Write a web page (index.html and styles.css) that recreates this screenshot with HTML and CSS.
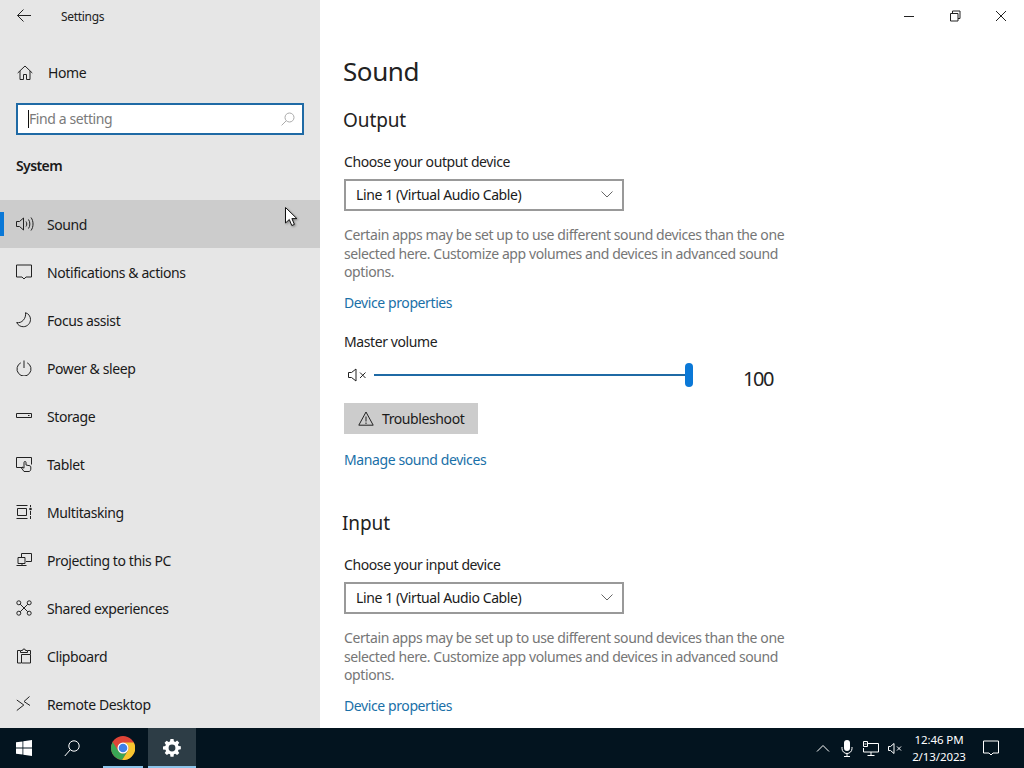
FILE: index.html
```html
<!DOCTYPE html>
<html lang="en">
<head>
<meta charset="utf-8">
<title>Settings</title>
<link rel="stylesheet" href="styles.css">
</head>
<body>
<div class="desktop">
  <div class="window">
    <aside class="sidebar">
      <div class="titlebar">
        <svg class="back" width="16" height="16" viewBox="0 0 16 16"><path d="M1.500 7.500H15M7.500 1.500l-6 6 6 6" /></svg>
        <span class="app-title">Settings</span>
      </div>
      <div class="home">
        <svg class="ico" width="16" height="16" viewBox="0 0 16 16"><path d="M.7 8L8 1l7.300 7M3 6v8.500h3.500V9.500h3v5H13V6"/></svg>
        <span>Home</span>
      </div>
      <div class="search">
        <span class="caret"></span><span class="placeholder">Find a setting</span>
        <svg class="search-ico" width="14" height="14" viewBox="0 0 14 14"><circle cx="8.500" cy="5.500" r="4.500"/><path d="M5.200 8.800L.6 13.400"/></svg>
      </div>
      <div class="group">System</div>
      <nav class="nav">
        <div class="nav-item active">
          <svg class="ico" width="18" height="16" viewBox="0 0 18 16"><path d="M.5 5.500h3L7.500 2v12l-4-3.500h-3zM10 5.500c1 1.500 1 3.500 0 5M12.500 3.500c1.800 2.500 1.800 6.500 0 9M15 1.500c2.700 3.500 2.700 9.500 0 13"/></svg>
          <span>Sound</span>
        </div>
        <div class="nav-item">
          <svg class="ico" width="16" height="16" viewBox="0 0 16 16"><path d="M.5 1h15v12h-5.500L8 15l-2-2H.5z"/></svg>
          <span>Notifications &amp; actions</span>
        </div>
        <div class="nav-item">
          <svg class="ico" width="16" height="16" viewBox="0 0 16 16"><path d="M9.500.7c3 1 5 3.500 5 6.700 0 4-3.200 7.300-7.200 7.300-3 0-5.500-1.600-6.600-4.200 4.800 1.300 9.800-4 8.800-9.800z"/></svg>
          <span>Focus assist</span>
        </div>
        <div class="nav-item">
          <svg class="ico" width="16" height="16" viewBox="0 0 16 16"><path d="M8 .5v7.500M4.800 2.800a7 7 0 1 0 6.400 0"/></svg>
          <span>Power &amp; sleep</span>
        </div>
        <div class="nav-item">
          <svg class="ico" width="16" height="16" viewBox="0 0 16 16"><path d="M.5 5.500h15v4H.5zM12 7.500h1.500"/></svg>
          <span>Storage</span>
        </div>
        <div class="nav-item">
          <svg class="ico" width="16" height="16" viewBox="0 0 16 16"><path d="M7 11.500H.5v-10h15v7M8 15.500l-2.500-3.500 1-.8 1.500 1V6.500a1 1 0 0 1 2 0V9l4 .8c.6.200.8.700.8 1.200v2c0 1-.7 2.500-1.800 2.500z"/></svg>
          <span>Tablet</span>
        </div>
        <div class="nav-item">
          <svg class="ico" width="16" height="16" viewBox="0 0 16 16"><path d="M.5 1.500h11M.5 14.500h11M1.500 4.500h9v7h-9zM14.500 1v2M14.500 12v3M14.500 7v4" /><circle class="fill" cx="14.500" cy="5" r="1.300"/></svg>
          <span>Multitasking</span>
        </div>
        <div class="nav-item">
          <svg class="ico" width="16" height="16" viewBox="0 0 16 16"><path d="M5.500 5V1.500h10v8H10M6 11.500v2M.5 13.500h10M2 5.500h7v6H2z"/></svg>
          <span>Projecting to this PC</span>
        </div>
        <div class="nav-item">
          <svg class="ico" width="16" height="16" viewBox="0 0 16 16"><circle cx="2.800" cy="2.800" r="2"/><circle cx="13.200" cy="2.800" r="2"/><circle cx="2.800" cy="13.200" r="2"/><circle cx="13.200" cy="13.200" r="2"/><path d="M4.300 4.300l7.400 7.400M11.700 4.300l-7.400 7.400"/></svg>
          <span>Shared experiences</span>
        </div>
        <div class="nav-item">
          <svg class="ico" width="16" height="16" viewBox="0 0 16 16"><path d="M4 2.500H1.500v12.500H5M12 2.500h2.500V6M4.500 4.500V2.500h2a1.500 1.500 0 0 1 3 0h2v2zM5.500 6.500h9v8.500h-9z"/></svg>
          <span>Clipboard</span>
        </div>
        <div class="nav-item">
          <svg class="ico" width="16" height="16" viewBox="0 0 16 16"><path d="M.8 4l7 5-7 5.500M13.500.5L8 5.500l6 4"/></svg>
          <span>Remote Desktop</span>
        </div>
      </nav>
    </aside>
    <main class="content">
      <div class="controls">
        <svg class="ctl" width="46" height="32" viewBox="0 0 46 32"><path d="M18 16.500h10"/></svg>
        <svg class="ctl" width="46" height="32" viewBox="0 0 46 32"><path d="M18.500 13.500h7.500v7.500h-7.500zM20.500 13.500v-2.500h7.500v7.500H26"/></svg>
        <svg class="ctl" width="46" height="32" viewBox="0 0 46 32"><path d="M18 11l10 10M28 11L18 21"/></svg>
      </div>
      <div class="page">
        <h1 class="page-title">Sound</h1>
        <h2 class="section first">Output</h2>
        <div class="label">Choose your output device</div>
        <div class="select"><span>Line 1 (Virtual Audio Cable)</span>
          <svg class="chev" width="12" height="7" viewBox="0 0 12 7"><path d="M.5.5L6 6l5.500-5.500"/></svg></div>
        <p class="note">Certain apps may be set up to use different sound devices than the one selected here. Customize app volumes and devices in advanced sound options.</p>
        <a class="link">Device properties</a>
        <div class="label volume-label">Master volume</div>
        <div class="volume">
          <svg class="ico mute" width="18" height="16" viewBox="0 0 18 16"><path d="M.5 5.500h3L8 2v12l-4.500-3.500h-3zM12 5.500l5.500 5.500M17.500 5.500L12 11"/></svg>
          <div class="slider"><div class="track"></div><div class="thumb"></div></div>
          <div class="vol-value">100</div>
        </div>
        <div class="button">
          <svg class="ico" width="16" height="15" viewBox="0 0 16 15"><path d="M8 1L.8 14.200h14.400zM8 5.500v5M8 11.500v1.500"/></svg>
          <span>Troubleshoot</span>
        </div>
        <a class="link manage">Manage sound devices</a>
        <h2 class="section input">Input</h2>
        <div class="label">Choose your input device</div>
        <div class="select"><span>Line 1 (Virtual Audio Cable)</span>
          <svg class="chev" width="12" height="7" viewBox="0 0 12 7"><path d="M.5.5L6 6l5.500-5.500"/></svg></div>
        <p class="note">Certain apps may be set up to use different sound devices than the one selected here. Customize app volumes and devices in advanced sound options.</p>
        <a class="link">Device properties</a>
      </div>
    </main>
  </div>
  <footer class="taskbar">
    <div class="tb-btn start">
      <svg width="16" height="16" viewBox="0 0 16 16"><path class="solid" d="M0 2.300l6.500-.9v6.200H0zM7.300 1.300L16 0v7.600H7.300zM0 8.400h6.500v6.200L0 13.700zM7.300 8.400H16V16l-8.700-1.300z"/></svg>
    </div>
    <div class="tb-btn">
      <svg class="line" width="16" height="17" viewBox="0 0 16 17"><circle cx="10" cy="6" r="5.200"/><path d="M6.300 9.700L.8 16"/></svg>
    </div>
    <div class="tb-btn open">
      <svg width="24" height="24" viewBox="0 0 24 24">
        <circle class="c-red" cx="12" cy="12" r="12"/>
        <path class="c-yellow" d="M12 6.500h10.800A12 12 0 0 1 11 24l5.800-9.300A5.500 5.500 0 0 0 12 6.500z"/>
        <path class="c-green" d="M1.700 5.900l5.500 8.900A5.500 5.500 0 0 0 12 17.500c1.800 0 3.800-1.200 4.800-2.800L11 24A12 12 0 0 1 1.700 5.900z"/>
        <circle class="c-white" cx="12" cy="12" r="5.500"/><circle class="c-blue" cx="12" cy="12" r="4.300"/>
      </svg>
    </div>
    <div class="tb-btn current">
      <svg width="18" height="18" viewBox="0 0 20 20"><path class="solid" fill-rule="evenodd" d="M8.300 0h3.400l.4 2.600 1.500.6 2.100-1.500 2.400 2.400-1.500 2.100.6 1.500 2.600.4v3.400l-2.600.4-.6 1.500 1.500 2.100-2.400 2.400-2.100-1.500-1.500.6-.4 2.600H8.300l-.4-2.600-1.500-.6-2.100 1.500-2.400-2.400 1.500-2.100-.6-1.500L0 11.700V8.300l2.600-.4.6-1.500-1.500-2.100 2.400-2.400 2.100 1.500 1.500-.6zM10 6.200a3.800 3.800 0 1 0 0 7.600 3.800 3.800 0 0 0 0-7.600z"/></svg>
    </div>
    <div class="tray">
      <div class="slot"><svg class="line" width="14" height="8" viewBox="0 0 14 8"><path d="M1 7.500l6-6 6 6"/></svg></div>
      <div class="slot"><svg width="12" height="17" viewBox="0 0 12 17"><rect class="solid" x="3" y="0" width="6" height="11" rx="3"/><path class="thin" d="M1 7v1.500a5 5 0 0 0 10 0V7M6 13.500v3M3 16.500h6"/></svg></div>
      <div class="slot"><svg class="line" width="16" height="15" viewBox="0 0 16 15"><path d="M5 2.500h10.500v8.500H.5V7M8 11v3.500M4.500 14.500h7M.5.500h4v5h-4zM1.500 3h2"/></svg></div>
      <div class="slot"><svg class="line" width="14" height="13" viewBox="0 0 14 13"><path d="M.5 4.500h2L6 1.500v10l-3.500-3h-2zM9 4.500l4 4M13 4.500l-4 4"/></svg></div>
      <div class="clock"><div>12:46 PM</div><div>2/13/2023</div></div>
      <svg class="line notif" width="16" height="16" viewBox="0 0 16 16"><path d="M.5 1h15v12h-5.500L8 15l-2-2H.5z"/></svg>
    </div>
  </footer>
  <svg class="cursor" width="15" height="20" viewBox="0 0 15 20"><path d="M.5.5v15.500l3.800-3.500 2.500 6 2.600-1.100-2.500-5.800h5z"/></svg>
</div>
</body>
</html>
```

FILE: styles.css
```css
* { box-sizing: border-box; }
html, body { margin: 0; padding: 0; }
body { font-family: "Noto Sans", "Liberation Sans", sans-serif; color: #1a1a1a; background: #fff; letter-spacing: -0.4px; }
.desktop { position: relative; width: 1024px; height: 768px; overflow: hidden; display: flex; flex-direction: column; }
.window { height: 728px; display: flex; overflow: hidden; }

svg path, svg circle, svg rect { fill: none; stroke: #222; stroke-width: 1; }

.sidebar { width: 320px; flex: none; background: #e6e6e6; font-size: 14px; }
.titlebar { height: 32px; display: flex; align-items: center; padding-left: 16px; }
.app-title { margin-left: 29px; font-size: 12px; color: #222; letter-spacing: -0.3px; }
.home { height: 48px; margin-top: 17px; display: flex; align-items: center; padding: 0 0 1px 17px; }
.home span { margin-left: 15px; }
.search { height: 32px; margin: 6px 16px 0; border: 2px solid #1f6aa5; background: #fff; display: flex; align-items: center; padding: 0 7px 0 10px; }
.caret { width: 1px; height: 18px; background: #111; }
.placeholder { color: #7a7a7a; font-size: 14px; flex: 1; margin-top: -1px; }
.search-ico circle, .search-ico path { stroke: #aaa; }
.group { margin: 21px 0 0 16px; height: 20px; font-size: 14px; font-weight: 600; line-height: 20px; letter-spacing: -0.6px; }
.nav { margin-top: 24px; }
.nav-item { height: 48px; display: flex; align-items: center; padding-left: 16px; position: relative; }
.nav-item .ico { flex: none; }
.nav-item svg + span { margin-left: 15px; }
.nav-item svg[width="18"] + span { margin-left: 13px; }
.nav-item.active { background: #ccc; }
.nav-item.active::before { content: ""; position: absolute; left: 0; top: 12px; width: 4px; height: 24px; background: #0a78d7; }
svg .fill { fill: #222; stroke: none; }

.content { flex: 1; background: #fff; display: flex; flex-direction: column; }
.controls { height: 32px; display: flex; justify-content: flex-end; flex: none; }
.ctl { display: block; }
.page { padding-left: 24px; flex: 1; font-size: 14px; }
.page-title { margin: 19px 0 0 -1px; font-size: 26px; font-weight: 400; line-height: 40px; color: #222; }
.section { margin: 0; font-size: 19px; font-weight: 400; line-height: 28px; margin-left: -1px; color: #222; letter-spacing: -0.1px; }
.section.first { margin-top: 15px; }
.section.input { margin-top: 39px; margin-left: -2px; }
.label { line-height: 20px; margin-top: 18px; height: 20px; color: #222; }
.select { width: 280px; height: 32px; margin-top: 7px; border: 2px solid #999; display: flex; align-items: center; justify-content: space-between; padding: 0 9px 1px 10px; }
.chev path { stroke: #666; }
.note { margin: 15px 0 0; width: 446px; height: 56px; font-size: 14px; line-height: 18.500px; color: #767676; }
.link { display: block; margin-top: 11px; line-height: 20px; color: #1a70a8; }
.label.volume-label { margin-top: 19px; }
.volume { display: flex; height: 24px; margin-top: 11px; align-items: center; }
.mute { margin-left: 4px; flex: none; }
.slider { position: relative; margin-left: 8px; width: 319px; height: 24px; flex: none; }
.track { position: absolute; left: 0; right: 4px; top: 11px; height: 2px; background: #1f6aa5; }
.thumb { position: absolute; right: 0; top: 0; width: 8px; height: 24px; border-radius: 4px; background: #0a78d7; }
.vol-value { margin-left: 50px; font-size: 20px; line-height: 28px; position: relative; top: 4px; color: #222; letter-spacing: -1.5px; }
.button { width: 134px; height: 31px; margin-top: 16px; background: #ccc; display: flex; align-items: center; padding-left: 14px; }
.button span { margin-left: 8px; }
.link.manage { margin-top: 16px; }

.taskbar { height: 40px; flex: none; background: #03141f; display: flex; align-items: center; color: #fff; }
.tb-btn { width: 48px; height: 40px; display: flex; align-items: center; justify-content: center; flex: none; position: relative; }
.tb-btn.open { margin-left: 3px; }
.tb-btn.current { margin-left: 1px; background: #2d3d46; }
.tb-btn.open::after, .tb-btn.current::after { content: ""; position: absolute; bottom: 0; height: 2px; background: #8cc4ea; }
.tb-btn.open::after { left: 4px; right: 4px; }
.tb-btn.current::after { left: 0; right: 0; }
.taskbar svg path, .taskbar svg circle, .taskbar svg rect { stroke: #fff; }
.taskbar svg path.solid, .taskbar svg rect.solid { fill: #fff; stroke: none; }
.taskbar svg .c-red { fill: #de4437; stroke: none; }
.taskbar svg .c-yellow { fill: #f7c52f; stroke: none; }
.taskbar svg .c-green { fill: #3aa655; stroke: none; }
.taskbar svg .c-white { fill: #fff; stroke: none; }
.taskbar svg .c-blue { fill: #3f7fe8; stroke: none; }
.tray { margin-left: auto; display: flex; align-items: center; height: 40px; }
.slot { width: 24px; height: 40px; display: flex; align-items: center; justify-content: center; }
.clock { width: 64px; text-align: center; font-size: 11.500px; line-height: 17px; letter-spacing: -0.1px; }
.notif { margin: 0 25px 0 12px; }

.cursor { position: absolute; left: 285px; top: 207px; filter: drop-shadow(1px 1px 1px rgba(0,0,0,.35)); }
.cursor path { fill: #fff; stroke: #111; }
```
